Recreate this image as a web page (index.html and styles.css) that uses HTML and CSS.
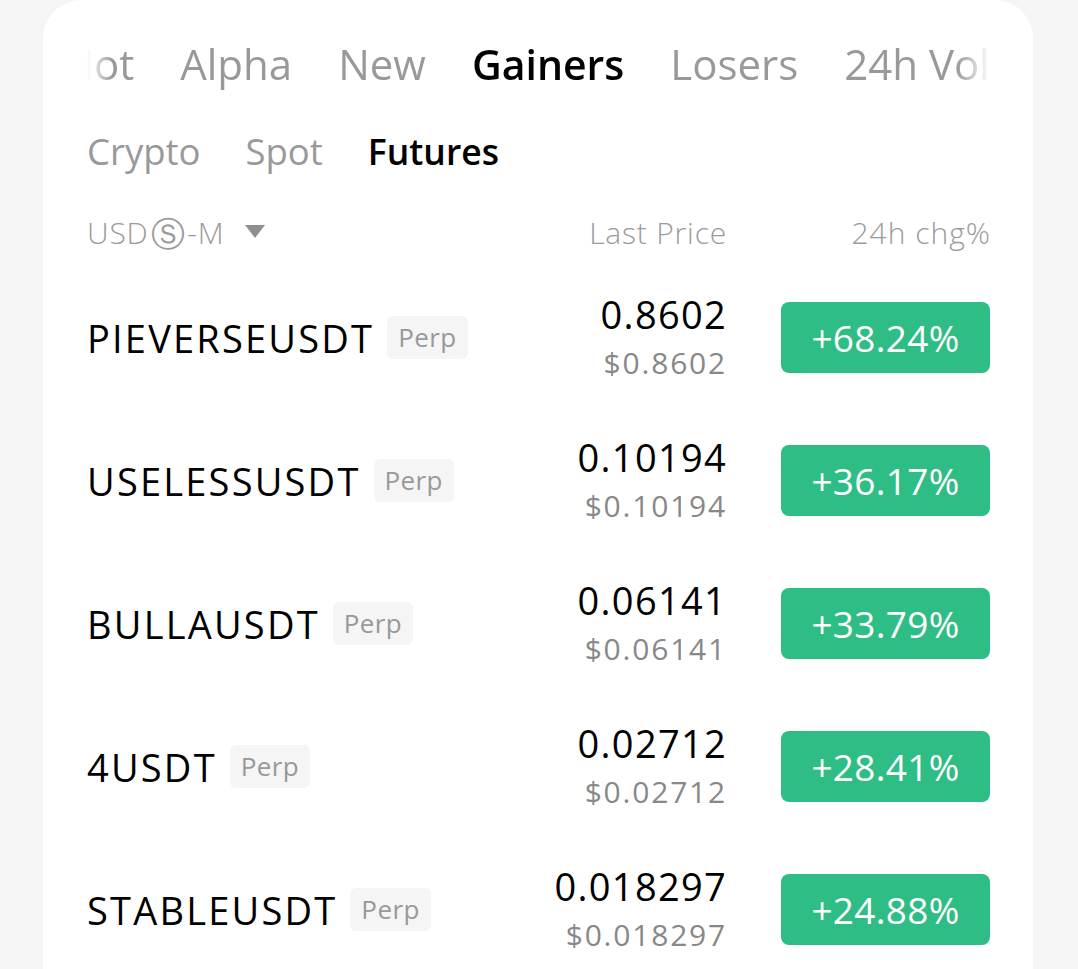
FILE: index.html
```html
<!DOCTYPE html>
<html lang="en">
<head>
    <meta charset="UTF-8">
    <meta name="viewport" content="width=device-width, initial-scale=1.0">
    <title>Markets</title>
    <link rel="stylesheet" href="styles.css">
</head>
<body>
    <div class="card">
        <div class="tabs">
            <div class="tabs-track">
                <span class="tab">Hot</span>
                <span class="tab">Alpha</span>
                <span class="tab">New</span>
                <span class="tab active">Gainers</span>
                <span class="tab">Losers</span>
                <span class="tab">24h Vol</span>
            </div>
        </div>

        <div class="subtabs">
            <span class="subtab">Crypto</span>
            <span class="subtab">Spot</span>
            <span class="subtab active">Futures</span>
        </div>

        <div class="list-header">
            <div class="market-select">
                <span>USD<span class="circled">Ⓢ</span>-M</span>
                <svg class="caret" width="20" height="13" viewBox="0 0 20 13"><path d="M0 0 H20 L10 13 Z" fill="#8f8f8f"/></svg>
            </div>
            <div class="col-price">Last Price</div>
            <div class="col-chg">24h chg%</div>
        </div>

        <div class="rows">
            <div class="row">
                <div class="pair"><span class="symbol">PIEVERSEUSDT</span><span class="tag">Perp</span></div>
                <div class="price"><div class="last">0.8602</div><div class="usd">$0.8602</div></div>
                <div class="chg">+68.24%</div>
            </div>
            <div class="row">
                <div class="pair"><span class="symbol">USELESSUSDT</span><span class="tag">Perp</span></div>
                <div class="price"><div class="last">0.10194</div><div class="usd">$0.10194</div></div>
                <div class="chg">+36.17%</div>
            </div>
            <div class="row">
                <div class="pair"><span class="symbol">BULLAUSDT</span><span class="tag">Perp</span></div>
                <div class="price"><div class="last">0.06141</div><div class="usd">$0.06141</div></div>
                <div class="chg">+33.79%</div>
            </div>
            <div class="row">
                <div class="pair"><span class="symbol">4USDT</span><span class="tag">Perp</span></div>
                <div class="price"><div class="last">0.02712</div><div class="usd">$0.02712</div></div>
                <div class="chg">+28.41%</div>
            </div>
            <div class="row">
                <div class="pair"><span class="symbol">STABLEUSDT</span><span class="tag">Perp</span></div>
                <div class="price"><div class="last">0.018297</div><div class="usd">$0.018297</div></div>
                <div class="chg">+24.88%</div>
            </div>
        </div>
    </div>
</body>
</html>
```

FILE: styles.css
```css
body {
    margin: 0;
    padding: 0;
    background-color: #f5f5f5;
    font-family: "Open Sans", "DejaVu Sans", sans-serif;
    color: #000;
}

.card {
    width: 990px;
    height: 969px;
    margin-left: 43px;
    padding: 0 43px 0 44px;
    box-sizing: border-box;
    background-color: #fff;
    border-radius: 38px 38px 0 0;
    overflow: hidden;
}

/* top tabs, scrolled a little so "Hot" is cut off */
.tabs {
    margin-top: 34px;
    height: 60px;
    overflow: hidden;
    -webkit-mask-image: linear-gradient(to right, transparent 0, #000 26px, #000 calc(100% - 34px), transparent 100%);
    mask-image: linear-gradient(to right, transparent 0, #000 26px, #000 calc(100% - 34px), transparent 100%);
}

.tabs-track {
    display: flex;
    gap: 46px;
    margin-left: -24px;
    white-space: nowrap;
}

.tab {
    font-size: 42px;
    line-height: 60px;
    color: #999;
}

.tab.active {
    color: #000;
    font-weight: 600;
    font-size: 41px;
}

.subtabs {
    display: flex;
    gap: 45px;
    margin-top: 32px;
}

.subtab {
    font-size: 36.5px;
    line-height: 50px;
    color: #999;
}

.subtab.active {
    color: #000;
    font-weight: 600;
    font-size: 35.5px;
}

.list-header {
    display: flex;
    align-items: center;
    margin-top: 36px;
    height: 40px;
    font-size: 30px;
    letter-spacing: 0.8px;
    color: #9b9b9b;
    font-weight: 300;
}

.market-select {
    flex: 1;
    display: flex;
    align-items: center;
    gap: 20px;
}

.circled {
    font-family: "DejaVu Sans", sans-serif;
    font-size: 34px;
    line-height: 1;
    margin: 0 2px;
    vertical-align: -2px;
}

.caret {
    margin-top: -2px;
}

.col-price {
    width: 265px;
    text-align: right;
    margin-right: -1px;
}

.col-chg {
    width: 265px;
    text-align: right;
    letter-spacing: 1px;
    margin-right: -1px;
}

.rows {
    margin-top: 14px;
}

.row {
    display: flex;
    align-items: center;
    height: 143px;
}

.pair {
    flex: 1;
    display: flex;
    align-items: center;
}

.symbol {
    font-size: 38px;
    font-weight: 500;
    letter-spacing: 2.2px;
}

.tag {
    margin-left: 13px;
    height: 43px;
    line-height: 43px;
    padding: 0 11px;
    border-radius: 6px;
    background-color: #f5f5f5;
    color: #999;
    font-size: 26px;
    letter-spacing: 0.4px;
}

.price {
    text-align: right;
    margin-right: -2px;
}

.last {
    font-size: 38px;
    line-height: 46px;
    font-weight: 500;
    letter-spacing: 1.3px;
}

.usd {
    font-size: 30px;
    line-height: 44px;
    margin-top: 4px;
    color: #888;
    letter-spacing: 1.8px;
}

.chg {
    width: 209px;
    height: 71px;
    margin-left: 56px;
    border-radius: 8px;
    background-color: #2ebd85;
    color: #fff;
    font-size: 37px;
    font-weight: 500;
    line-height: 71px;
    text-align: center;
    letter-spacing: 0.3px;
}
```
